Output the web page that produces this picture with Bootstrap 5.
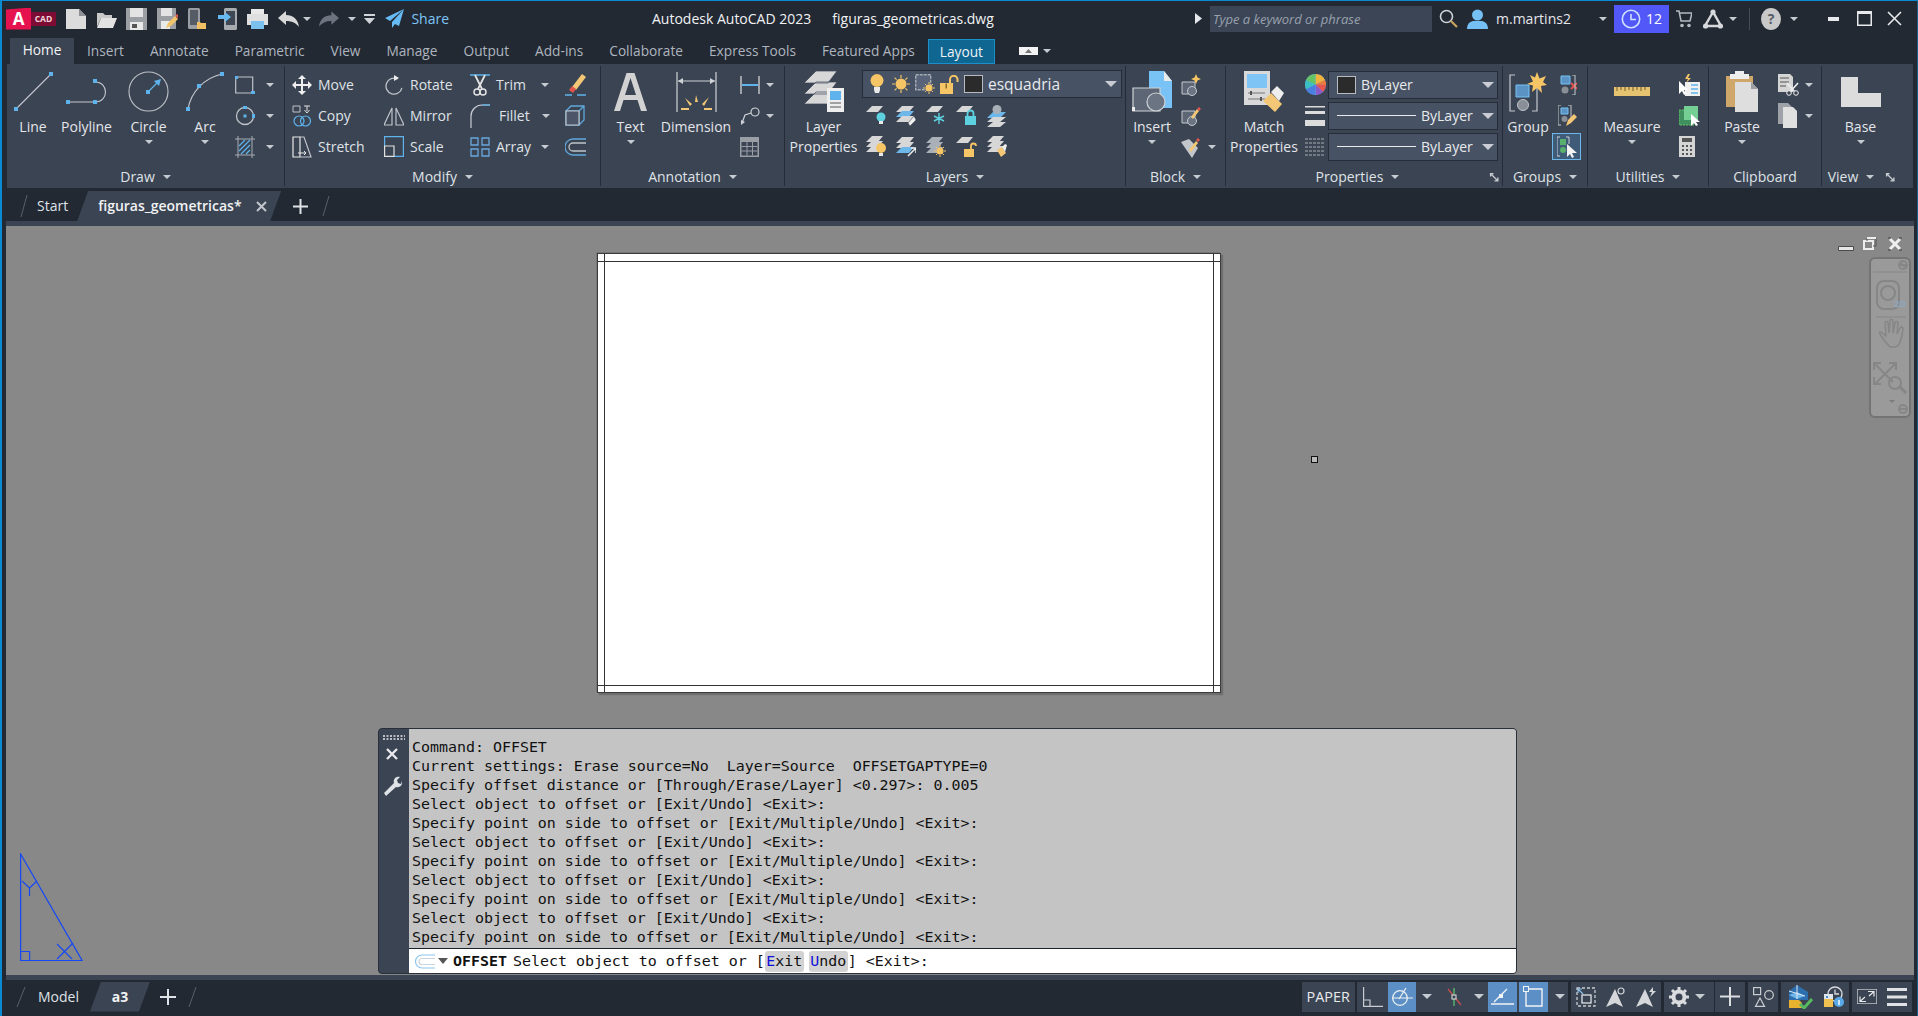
<!doctype html>
<html lang="en"><head><meta charset="utf-8"><title>Autodesk AutoCAD 2023</title>
<link href="https://cdn.jsdelivr.net/npm/bootstrap@5.3.0/dist/css/bootstrap.min.css" rel="stylesheet">
<style>
html,body{height:100%}
body{width:1918px;height:1016px;overflow:hidden;background:#222933;color:#dfe2e6;font-family:"Open Sans","Noto Sans",sans-serif;font-size:14px;line-height:20px}
svg{display:block;flex:none}
.frame{height:1016px;border-top:1px solid #0a8ad2;border-left:2px solid #0a8ad2;border-right:1px solid #1a5f88}
.cr{display:block;flex:none;width:0;height:0;border-left:4px solid transparent;border-right:4px solid transparent;border-top:4px solid #c6cbd2}
.titlebar{height:37px;padding-bottom:2px}
.tb-left{width:650px}
.tb-title{width:543px;color:#f1f2f4}
.logo-a{width:25px;height:22px;margin-left:4px;background:#e5124f;color:#fff;font-weight:700;font-size:17px;line-height:21px;text-align:center;clip-path:polygon(0 2px,100% 0,100% 100%,0 100%)}
.logo-c{width:25px;height:14px;background:#7d0b33;color:#f3d6de;font-weight:700;font-size:8.5px;line-height:14px;text-align:center}
.qat{width:30.3px;height:30px}
.ml3{margin-left:3px}.ml5{margin-left:5px}.ml6{margin-left:6px}.ml7{margin-left:7px}.ml8{margin-left:8px}.ml9{margin-left:9px}.ml10{margin-left:10px}.ml11{margin-left:11px}.ml12{margin-left:12px}.ml14{margin-left:14px}.ml15{margin-left:15px}.ml18{margin-left:18px}.ml21{margin-left:21px}.ml30{margin-left:30px}
.c2{grid-column:2}.c3{grid-column:3}.c4{grid-column:4}.c5{grid-column:5}.r1{grid-row:1}.r2{grid-row:2}.r3{grid-row:3}
.share{color:#7fc6f6}
.srch{width:222px;height:26px;background:#3c4556;color:#98a1ad;font-style:italic;font-size:13px;line-height:26px;padding-left:3px}
.uname{width:103px;color:#e4e6ea}
.pill{width:55px;height:28px;background:#5158f7;color:#fff;padding-left:7px;gap:5px}
.vbar{width:1px;height:22px;background:#454c59}
.tabrow{height:26px;padding-left:8px}
.tabrow .nav-link{padding:0 13px;height:25px;line-height:24px;color:#aeb5bf;font-size:13.7px}
.tabrow .nav-link.on{background:#3b4453;color:#f2f3f5;padding:0;width:64px;text-align:center;height:26px}
.tabrow .nav-link.lay{background:#0f6690;color:#eef3f6;border:1px solid #1b8fca;padding:0 11px}
.ribbon{height:124px;background:#3b4453;margin-left:5px;width:1906px}
.pn{position:relative;border-right:1px solid #252c38;margin:2px 0}
.pb{display:grid;height:98px;margin-top:3px;grid-template-rows:31px 31px 31px}
.pf{height:21px;font-size:14px;color:#dfe2e6;align-items:center;margin-top:-1px}
.pt{gap:8px}
.big{grid-row:1/4;display:flex;flex-direction:column;align-items:center;font-size:14px;line-height:20px;text-align:center;white-space:nowrap;color:#e3e6ea}
.bi{height:45px;flex:none;display:flex;align-items:center;justify-content:center}
.big .lb{margin-top:3px}
.big .cr{margin-top:3px}
.s{display:flex;align-items:center;gap:6px;white-space:nowrap;height:31px}
.s .cr{margin-left:auto}
.p7{padding-left:7px}.p4{padding-left:4px}.p3{padding-left:3px}.p6{padding-left:6px}.p8{padding-left:8px}
.rp10{padding-right:10px}.rp9{padding-right:9px}
.g-draw{width:277px;grid-template-columns:52px 55px 69px 44px 57px}
.g-mod{width:315px;grid-template-columns:95px 86px 93px 40px}
.g-ann{width:183px;grid-template-columns:59px 72px 52px}
.g-lay{width:340px;grid-template-columns:77px 263px}
.g-blk{width:99px;grid-template-columns:52px 47px}
.g-pro{width:276px;grid-template-columns:76px 26px 170px}
.g-grp{width:84px;grid-template-columns:50px 34px}
.g-utl{width:120px;grid-template-columns:88px 32px}
.g-clp{width:112px;grid-template-columns:66px 46px}
.g-vew{width:90px;grid-template-columns:77px}
.ldd{height:28px;width:260px;margin:1px 0 0 0;padding:0 4px 0 7px;gap:5px;background:#475264;border:1px solid #262d39;color:#e8eaed}
.ldd .cr,.dd .cr{border-left-width:6px;border-right-width:6px;border-top-width:6px;margin-left:auto;border-top-color:#c9cdd3}
.esq{font-size:15.5px}
.lrow{display:flex;align-items:center;gap:10px;padding-left:4px}
.dd{height:28px;width:170px;background:#475264;border:1px solid #262d39;padding:0 3px 0 8px;gap:5px;color:#e8eaed;align-self:center}
.swt{width:19px;height:18px;background:#2b2b2b;border:1px solid #b8bcc2;flex:none}
.ddl{width:79px;height:1px;background:#e8eaed;flex:none}
.lnch{margin-right:3px}
.actv{width:29px;height:27px;border:1px solid #6eb7ea;background:#3f5b78;margin-left:-1px;align-self:center}
.ftabs{height:33px;padding-top:3px}
.ftab{height:30px;font-weight:600;color:#f1f2f4;background:#3b4453;width:204px;padding-left:21px;clip-path:polygon(11px 0,100% 0,calc(100% - 11px) 100%,0 100%);margin-left:9px}
.band{height:5px;background:#3b4453;margin-left:4px;margin-right:3px}
.canvas{position:relative;height:749px;background:#888;margin:0 3px 0 4px;overflow:hidden}
.paper{position:absolute;left:591px;top:27px;width:624px;height:440px;background:#fff;border:1px solid #3a3a3a;box-shadow:2px 2px 1px #6e6e6e,-1px -1px 0 #777}
.paper svg{position:absolute;left:0;top:0}
.pick{position:absolute;left:1305px;top:230px;width:7px;height:7px;border:1px solid #111;background:#bbb}
.ucs{position:absolute;left:14px;top:627px}
.vpc{position:absolute;left:1832px;top:10px}
.navb{position:absolute;left:1863px;top:31px;width:42px;height:161px;background:#9a9a9a;border:2px solid #747474;border-radius:6px}
.cmd{position:absolute;left:372px;top:502px;width:1139px;height:246px;background:#3b4453;border-radius:4px;overflow:hidden;border:1px solid #2a303b}
.cside{width:30px;padding-top:6px}
.mx3{margin-right:3px}
.cmain{width:1108px}
.clog{height:220px;background:#c4c4c4;padding:9px 0 0 3px;font-family:"DejaVu Sans Mono","Liberation Mono",monospace;font-size:14.95px;line-height:19px;color:#111;white-space:pre}
.cin{height:25px;background:#fff;border-top:1px solid #1c222c;font-family:"DejaVu Sans Mono","Liberation Mono",monospace;font-size:14.95px;line-height:23px;color:#111;white-space:pre;padding-left:5px}
.cin b{margin-left:5px;margin-right:6px}
.hl{display:inline-block;background:#d2d2d2;border-radius:3px;padding:0 1.5px;line-height:21px}
.hl i{font-style:normal;color:#1010d8}
.ul2{margin-left:5px}
.lbar{height:36px;padding-bottom:3px}
.ltab{height:30px;width:60px;background:#3b4453;clip-path:polygon(11px 0,100% 0,calc(100% - 11px) 100%,0 100%);font-weight:700;color:#f1f2f4;text-align:center;line-height:30px}
.sbar{margin-left:auto;margin-right:5px}
.sg{height:30px;background:#3b4453;display:flex;align-items:center}
.sc{width:29px;height:30px;display:flex;align-items:center;justify-content:center;flex:none}
.sc.on{background:#5c8fc6}
.w28{width:28px}.w31{width:31px}.w33{width:33px}
.sk{width:21px;height:30px;display:flex;align-items:center;justify-content:center;flex:none}
.k22{width:22px}.k16{width:16px}
.sk .cr{border-left-width:5px;border-right-width:5px;border-top-width:5px}
.sp{width:52.5px;text-align:center;color:#e8eaed;line-height:30px;font-size:14.4px;display:block}
.s1{width:130.5px;margin-left:2.5px}.s2{width:80px;margin-left:.5px}.s3{width:90px;justify-content:space-around;margin-left:3px}.s4{width:50px;margin-left:3px}.s5{width:30.5px;margin-left:.5px;justify-content:center}.s6{width:30px;justify-content:center;margin-left:3px}.s7{width:68px;justify-content:space-around;margin-left:3px}.s8{width:60px;justify-content:space-around;margin-left:3px}
.gap1{gap:1.5px}
</style></head>
<body>
<div class="frame d-flex flex-column">
<!-- title bar -->
<div class="titlebar d-flex align-items-center">
 <div class="tb-left d-flex align-items-center">
  <div class="logo-a">A</div><div class="logo-c">CAD</div>
  <div class="d-flex align-items-center ml5">
   <div class="qat d-flex align-items-center justify-content-center"><svg width="20" height="20" viewBox="0 0 20 20"><path d="M0 0h13l7 7v13H0z" fill="#dcdcdc"/><path d="M13 0v7h7" fill="#8c8f93"/></svg></div>
   <div class="qat d-flex align-items-center justify-content-center"><svg width="21" height="18" viewBox="0 0 21 18"><path d="M1 17V3h6l2 2h7v3H5L1 17z" fill="#c9c9c9"/><path d="M5 8h16l-4 10H1z" fill="#e2e2e2"/></svg></div>
   <div class="qat d-flex align-items-center justify-content-center"><svg width="21" height="22" viewBox="0 0 21 22"><path d="M0 0h21v22H0z" fill="#9b9fa4"/><path d="M4 0h13v9H4z" fill="#e3e3e3"/><path d="M4 14h13v8H4z" fill="#e9e9e9"/><path d="M6 16h5v4H6z" fill="#555"/></svg></div>
   <div class="qat d-flex align-items-center justify-content-center"><svg width="21" height="22" viewBox="0 0 21 22"><path d="M0 0h19v21H0z" fill="#9b9fa4"/><path d="M4 0h11v8H4z" fill="#e3e3e3"/><path d="M4 13h9v8H4z" fill="#e9e9e9"/><path d="M9 20l2-5 7-7 3 3-7 7z" fill="#f2c46c"/><path d="M18 8l2-2 1 1v3z" fill="#e65a4c"/></svg></div>
   <div class="qat d-flex align-items-center justify-content-center"><svg width="19" height="22" viewBox="0 0 19 22"><rect x="0" y="0" width="12" height="21" rx="1.5" fill="#9a9ea4"/><rect x="2" y="2" width="8" height="15" fill="#565c66"/><path d="M9 14h3l1 1h5v6H9z" fill="#f1c064"/></svg></div>
   <div class="qat d-flex align-items-center justify-content-center"><svg width="19" height="22" viewBox="0 0 19 22"><rect x="6" y="0" width="13" height="22" rx="1.5" fill="#a8acb1"/><rect x="8" y="3" width="9" height="14" fill="#3f4654"/><path d="M0 7h7V4l6 5-6 5v-3H0z" fill="#64b9f2"/></svg></div>
   <div class="qat d-flex align-items-center justify-content-center"><svg width="21" height="20" viewBox="0 0 21 20"><rect x="4" y="0" width="13" height="5" fill="#e8e8e8"/><path d="M0 5h21v11H0z" fill="#dfdfdf"/><rect x="4" y="12" width="13" height="8" fill="#7cc0ee"/></svg></div>
   <div class="qat d-flex align-items-center justify-content-center"><svg width="21" height="16" viewBox="0 0 21 16"><path d="M0 7l8-7v4c7 0 12 4 13 12-3-4-7-6-13-6v4z" fill="#d8d8d8"/></svg></div>
   <span class="cr"></span>
   <svg class="ml8" width="20" height="16" viewBox="0 0 21 16"><path d="M21 7l-8-7v4C6 4 1 8 0 16c3-4 7-6 13-6v4z" fill="#6d7480"/></svg>
   <span class="cr ml9"></span>
   <svg class="ml8" width="11" height="10" viewBox="0 0 11 10"><path d="M0 0h11v2H0zM0 4h11L5.5 10z" fill="#d0d3d8"/></svg>
   <svg class="ml10" width="19" height="19" viewBox="0 0 19 19"><path d="M19 0L0 9l5 3L19 0 7 13v6l3-4 4 2z" fill="#67bbf4"/></svg>
   <span class="share ml7">Share</span>
  </div>
 </div>
 <div class="tb-title"><span>Autodesk AutoCAD 2023</span><span class="ml21">figuras_geometricas.dwg</span></div>
 <svg width="7" height="11" viewBox="0 0 7 11"><path d="M0 0l7 5.5L0 11z" fill="#e6e8ec"/></svg>
 <div class="srch ml8">Type a keyword or phrase</div>
 <svg class="ml7" width="19" height="19" viewBox="0 0 19 19"><circle cx="7.5" cy="7.5" r="6" fill="none" stroke="#cfd2d6" stroke-width="1.6"/><path d="M12 12l6 6" stroke="#c9a35e" stroke-width="2.2"/></svg>
 <svg class="ml9" width="21" height="20" viewBox="0 0 21 20"><circle cx="10.5" cy="6" r="5.5" fill="#74bff3"/><path d="M0 20c0-6 4-8 7-8h7c3 0 7 2 7 8z" fill="#74bff3"/></svg>
 <span class="uname ml8">m.martins2</span><span class="cr"></span>
 <div class="pill d-flex align-items-center ml7"><svg width="20" height="20" viewBox="0 0 20 20"><circle cx="10" cy="10" r="8.7" fill="none" stroke="#cfe0ff" stroke-width="1.6"/><path d="M10 5v5.5h5" fill="none" stroke="#cfe0ff" stroke-width="1.6"/></svg><span>12</span></div>
 <svg class="ml7" width="16" height="18" viewBox="0 0 16 18"><path d="M0 1h3l2 10h9l2-8H4" fill="none" stroke="#b7bbc1" stroke-width="1.5"/><circle cx="6" cy="15.5" r="1.8" fill="#b7bbc1"/><circle cx="13" cy="15.5" r="1.8" fill="#b7bbc1"/></svg>
 <svg class="ml11" width="20" height="20" viewBox="0 0 20 20"><path d="M10 3L2 17h16z" fill="none" stroke="#d6d8dc" stroke-width="2.4"/><circle cx="10" cy="3" r="2.6" fill="#d6d8dc"/><circle cx="2.6" cy="17" r="2.6" fill="#d6d8dc"/><circle cx="17.4" cy="17" r="2.6" fill="#d6d8dc"/></svg>
 <span class="cr ml6"></span>
 <div class="vbar ml12"></div>
 <svg class="ml11" width="20" height="22" viewBox="0 0 20 22"><ellipse cx="10" cy="11" rx="10" ry="11" fill="#c9c9c9"/><text x="10" y="16" font-size="14" font-weight="700" text-anchor="middle" fill="#555c66" font-family="Open Sans">?</text></svg>
 <span class="cr ml9"></span>
 <svg class="ml30" width="11" height="4" viewBox="0 0 11 4"><path d="M0 0h11v4H0z" fill="#e6e8ec"/></svg>
 <svg class="ml18" width="15" height="15" viewBox="0 0 15 15"><path d="M.75 .75h13.5v13.5H.75z" fill="none" stroke="#e6e8ec" stroke-width="1.5"/><path d="M0 0h15v3H0z" fill="#e6e8ec"/></svg>
 <svg class="ml15" width="15" height="15" viewBox="0 0 15 15"><path d="M1 1l13 13M14 1L1 14" stroke="#e6e8ec" stroke-width="1.6"/></svg>
</div>
<!-- ribbon tabs -->
<ul class="nav tabrow flex-nowrap align-items-end">
 <li class="nav-item"><a class="nav-link on" href="#">Home</a></li>
 <li class="nav-item"><a class="nav-link" href="#">Insert</a></li>
 <li class="nav-item"><a class="nav-link" href="#">Annotate</a></li>
 <li class="nav-item"><a class="nav-link" href="#">Parametric</a></li>
 <li class="nav-item"><a class="nav-link" href="#">View</a></li>
 <li class="nav-item"><a class="nav-link" href="#">Manage</a></li>
 <li class="nav-item"><a class="nav-link" href="#">Output</a></li>
 <li class="nav-item"><a class="nav-link" href="#">Add-ins</a></li>
 <li class="nav-item"><a class="nav-link" href="#">Collaborate</a></li>
 <li class="nav-item"><a class="nav-link" href="#">Express Tools</a></li>
 <li class="nav-item"><a class="nav-link" href="#">Featured Apps</a></li>
 <li class="nav-item"><a class="nav-link lay" href="#">Layout</a></li>
 <li class="nav-item align-self-center d-flex align-items-center ms-4"><svg width="19" height="8" viewBox="0 0 19 8"><path d="M0 0h19v8H0z" fill="#f3f3f3"/><path d="M6 6l3.500-4L13 6z" fill="#777"/></svg><span class="cr ml5"></span></li>
</ul>
<!-- ribbon -->
<div class="ribbon d-flex">
 <div class="pn"><div class="pb g-draw">
  <div class="big"><div class="bi"><svg width="39" height="39" viewBox="0 0 39 39"><path d="M2 37L37 2" stroke="#c5c9cf" stroke-width="1.1"/><path d="M0 35h4v4H0zM35 0h4v4h-4z" fill="#5fb3ec"/></svg></div><span class="lb">Line</span></div>
  <div class="big"><div class="bi"><svg width="41" height="26" viewBox="0 0 41 26"><path d="M2 23h27M29 23c14 0 14-20 0-20" fill="none" stroke="#c5c9cf" stroke-width="1.1"/><path d="M0 21h4v4H0zM27 21h4v4h-4zM27 0h4v4h-4z" fill="#5fb3ec"/></svg></div><span class="lb">Polyline</span></div>
  <div class="big"><div class="bi"><svg width="41" height="41" viewBox="0 0 41 41"><circle cx="20.500" cy="20.500" r="19.500" fill="none" stroke="#bfc3c9" stroke-width="1.1"/><path d="M20 21L32 9" stroke="#5fb3ec" stroke-width="1.3"/><path d="M33 8l-7 2 5 5z M18 19h4v4h-4z" fill="#5fb3ec"/></svg></div><span class="lb">Circle</span><span class="cr"></span></div>
  <div class="big"><div class="bi"><svg width="38" height="39" viewBox="0 0 38 39"><path d="M2 37C5 20 18 6 36 2" fill="none" stroke="#c5c9cf" stroke-width="1.1"/><path d="M0 35h4v4H0zM11 12h4v4h-4zM34 0h4v4h-4z" fill="#5fb3ec"/></svg></div><span class="lb">Arc</span><span class="cr"></span></div>
  <div class="s p8 rp10"><svg width="20" height="18" viewBox="0 0 20 18"><path d="M.7 1h17v16H.7z" fill="none" stroke="#bfc3c9" stroke-width="1.2"/><path d="M16 15h4v3h-4zM0 0h3v3H0z" fill="#5fb3ec"/></svg><span class="cr"></span></div>
  <div class="s p8 rp10 c5 r2"><svg width="20" height="20" viewBox="0 0 20 20"><circle cx="10" cy="10" r="8.500" fill="none" stroke="#bfc3c9" stroke-width="1.3"/><path d="M8 0h4v3H8zM17 8h3v4h-3zM8.500 8.500h3v3h-3z" fill="#5fb3ec"/></svg><span class="cr"></span></div>
  <div class="s p8 rp10 c5 r3"><svg width="20" height="22" viewBox="0 0 20 22"><path d="M0 3h20M0 19h20M3 0v22M17 0v22" stroke="#a7acb3"/><path d="M4 10l6-6M4 15l11-11M6 18l9-9M11 18l4-4" stroke="#5fb3ec" stroke-width="1.300"/></svg><span class="cr"></span></div>
 </div><div class="pf d-flex justify-content-center"><div class="d-flex align-items-center pt"><span>Draw</span><span class="cr"></span></div></div></div>

 <div class="pn"><div class="pb g-mod">
  <div class="s p7"><svg width="20" height="20" viewBox="0 0 20 20"><path d="M10 0l4 4h-3v5h5V6l4 4-4 4v-3h-5v5h3l-4 4-4-4h3v-5H4v3l-4-4 4-4v3h5V4H6z" fill="#efefef"/></svg><span>Move</span></div>
  <div class="s p4"><svg width="20" height="20" viewBox="0 0 20 20"><path d="M11 3.200A8 8 0 1 0 18 10" fill="none" stroke="#bfc3c9" stroke-width="1.300" transform="rotate(20 10 11)"/><path d="M10 0v6l5-3z" fill="#ededed"/></svg><span>Rotate</span></div>
  <div class="s p4 rp10"><svg width="20" height="24" viewBox="0 0 20 24"><path d="M0 2h20" stroke="#5fb3ec" stroke-width="1.500"/><path d="M5 2l7 14M15 2L8 16" stroke="#e2e2e2" stroke-width="1.800"/><circle cx="7" cy="19" r="3" fill="none" stroke="#e2e2e2" stroke-width="1.500"/><circle cx="13" cy="19" r="3" fill="none" stroke="#e2e2e2" stroke-width="1.500"/></svg><span>Trim</span><span class="cr"></span></div>
  <div class="s p6"><svg width="21" height="23" viewBox="0 0 21 23"><path d="M7 14L17 1l4 3-10 13z" fill="#f3c775"/><path d="M4 17l3-4 4 3-3 4z" fill="#e2554e"/><path d="M0 22h7M12 22h9" stroke="#5fb3ec" stroke-width="1.300"/></svg></div>
  <div class="s p7 r2"><svg width="20" height="22" viewBox="0 0 20 22"><path d="M1 1h7v6H1z" fill="none" stroke="#bfc3c9"/><path d="M12 1h6M15 1v5M12.500 5l2.500 3 2.500-3" fill="none" stroke="#e2e2e2"/><circle cx="7" cy="16" r="5" fill="none" stroke="#5fb3ec" stroke-width="1.200"/><circle cx="13.500" cy="16" r="5" fill="none" stroke="#5fb3ec" stroke-width="1.200"/></svg><span>Copy</span></div>
  <div class="s p4 c2 r2"><svg width="20" height="20" viewBox="0 0 20 20"><path d="M8 2v17H0zM12 2v17h8z" fill="none" stroke="#bfc3c9" stroke-width="1.200"/></svg><span>Mirror</span></div>
  <div class="s p4 rp9 c3 r2"><svg width="20" height="24" viewBox="0 0 20 24"><path d="M1 24V12C1 6 6 1 12 1h8" fill="none" stroke="#c9cdd3" stroke-width="1.200"/><path d="M12 1h8" stroke="#5fb3ec" stroke-width="1.200"/></svg><span class="ml3">Fillet</span><span class="cr"></span></div>
  <div class="s p6 c4 r2"><svg width="20" height="21" viewBox="0 0 20 21"><path d="M1 6h13v14H1zM1 6l5-5h13v14l-5 5M14 6l5-5" fill="none" stroke="#5fa8dd" stroke-width="1.300"/><path d="M1 6h13v14H1z" fill="#4d5668" stroke="#bfc3c9" stroke-width="1.200"/></svg></div>
  <div class="s p7 r3"><svg width="20" height="22" viewBox="0 0 20 22"><path d="M1 1h7v20H1z" fill="none" stroke="#e8e8e8" stroke-width="1.200"/><path d="M8 1h4l7 20H8" fill="none" stroke="#bfc3c9" stroke-width="1.200"/><path d="M6 17h8M12 15l2 2-2 2" fill="none" stroke="#e8e8e8"/></svg><span>Stretch</span></div>
  <div class="s p4 c2 r3"><svg width="20" height="21" viewBox="0 0 20 21"><path d="M.6 10V.600h18.800V20.400H10" fill="none" stroke="#5fb3ec" stroke-width="1.200"/><path d="M.6 10h9.400v10.400H.6z" fill="none" stroke="#e2e2e2" stroke-width="1.200"/></svg><span>Scale</span></div>
  <div class="s p4 rp10 c3 r3"><svg width="20" height="20" viewBox="0 0 20 20"><path d="M1 1h7v7H1zM12 1h7v7h-7zM1 12h7v7H1zM12 12h7v7h-7z" fill="none" stroke="#6aa8dd" stroke-width="1.300"/></svg><span>Array</span><span class="cr"></span></div>
  <div class="s p6 c4 r3"><svg width="21" height="18" viewBox="0 0 21 18"><path d="M21 1H8a8 8 0 0 0 0 16h13" fill="none" stroke="#5fa8dd" stroke-width="1.300"/><path d="M21 5H8a4 4 0 0 0 0 8h13" fill="none" stroke="#bfc3c9" stroke-width="1.300"/></svg></div>
 </div><div class="pf d-flex justify-content-center"><div class="d-flex align-items-center pt"><span>Modify</span><span class="cr"></span></div></div></div>

 <div class="pn"><div class="pb g-ann">
  <div class="big"><div class="bi"><svg width="33" height="38" viewBox="0 0 33 38"><path d="M12.500 0h8L33 38h-6l-3.500-11H9.500L6 38H0zM11 22h11L16.500 5z" fill="#d2d2d2"/></svg></div><span class="lb">Text</span><span class="cr"></span></div>
  <div class="big"><div class="bi"><svg width="41" height="40" viewBox="0 0 41 40"><path d="M1 0v40M40 0v40M2 9h37" stroke="#cfd2d6" stroke-width="1.200"/><path d="M2 9l5-3v6zM39 9l-5-3v6z" fill="#cfd2d6"/><path d="M20 23l2 7h-3zM9 26l7 6-2 2zM33 25l-7 7 2 2zM5 36h8v2H5zM28 36h8v2h-8z" fill="#f3c775"/></svg></div><span class="lb">Dimension</span></div>
  <div class="s p8 rp10"><svg width="20" height="18" viewBox="0 0 20 18"><path d="M1 0v18M19 0v18" stroke="#e2e2e2" stroke-width="1.200"/><path d="M2 9h16" stroke="#5fb3ec" stroke-width="2"/></svg><span class="cr"></span></div>
  <div class="s p8 rp10 c3 r2"><svg width="20" height="18" viewBox="0 0 20 18"><circle cx="15" cy="5" r="4" fill="none" stroke="#d0d3d8" stroke-width="1.200"/><path d="M11 6L5 8 2 16" fill="none" stroke="#d0d3d8" stroke-width="1.200"/><path d="M1 18l0-5 4 2z" fill="#d0d3d8"/></svg><span class="cr"></span></div>
  <div class="s p8 c3 r3"><svg width="19" height="20" viewBox="0 0 19 20"><path d="M0 0h19v20H0z" fill="#9a9ea5"/><path d="M1.500 5h16v13.500h-16z" fill="#3b4453"/><path d="M1.500 9.500h16M1.500 14h16M7 5v13.500M12.500 5v13.500" stroke="#9a9ea5"/></svg></div>
 </div><div class="pf d-flex justify-content-center"><div class="d-flex align-items-center pt"><span>Annotation</span><span class="cr"></span></div></div></div>

 <div class="pn"><div class="pb g-lay">
  <div class="big"><div class="bi"><svg width="40" height="41" viewBox="0 0 40 41"><path d="M12 0h21l-9 12H0zM12 11h21l-9 12H0zM12 21h21l-9 12H0z" fill="#d7d7d7" stroke="#3b4453" stroke-width=".7"/><path d="M23 17h17v24H23z" fill="#eee"/><path d="M26 20h11v9H26z" fill="#5fb3ec"/><path d="M26 32h11M26 36h11" stroke="#555"/></svg></div><span class="lb">Layer</span><span>Properties</span></div>
  <div class="ldd d-flex align-items-center">
   <svg width="14" height="20" viewBox="0 0 14 20"><circle cx="7" cy="6.500" r="6.500" fill="#f6c566"/><path d="M4 13h6v3l-1 3H5l-1-3z" fill="#e9e9e9"/></svg>
   <svg class="ml3" width="18" height="18" viewBox="0 0 18 18"><circle cx="9" cy="9" r="5.500" fill="#f6c566"/><path d="M9 0v3M9 15v3M0 9h3M15 9h3M2.600 2.600l2 2M13.400 13.400l2 2M2.600 15.400l2-2M13.400 4.600l2-2" stroke="#f6c566" stroke-width="1.200"/></svg>
   <svg width="20" height="20" viewBox="0 0 20 20"><path d="M.7 .7h15v15H.7z" fill="#59647a" stroke="#a8acb3" stroke-width="1.400" stroke-dasharray="3 1"/><circle cx="14" cy="14" r="3.500" fill="#f6c566"/><path d="M14 8v2M14 18v2M8 14h2M18 14h2M10 10l1.400 1.400M16.600 16.600L18 18M10 18l1.400-1.400M16.600 11.400L18 10" stroke="#f6c566"/></svg>
   <svg width="19" height="19" viewBox="0 0 19 19"><path d="M0 8h13v11H0z" fill="#f6c566"/><path d="M5.500 8.500h1.500v5H5.500z" fill="#8a6d2e"/><path d="M10 8V4.500a3.500 3.500 0 0 1 7.500 0V7" fill="none" stroke="#f6c566" stroke-width="2"/></svg>
   <div class="swt"></div><span class="esq">esquadria</span><span class="cr"></span></div>
  <div class="lrow c2 r2">
   <svg width="20" height="19" viewBox="0 0 20 19"><path d="M6 0h11l-5 6H0z" fill="#d7d7d7"/><circle cx="15" cy="11" r="4.500" fill="#5ed1e0"/><path d="M13 15h4v3h-4z" fill="#e8e8e8"/></svg>
   <svg width="20" height="20" viewBox="0 0 20 20"><path d="M6 0h12l-5 6H0z" fill="#d7d7d7"/><path d="M6 5h12l-5 6H0z" fill="#6eb7ea"/><path d="M6 10h12l-5 6H0z" fill="#d7d7d7"/><path d="M18 10l-6 7 2 3 6-6z" fill="#eee" stroke="#3b4453" stroke-width=".5"/></svg>
   <svg width="20" height="19" viewBox="0 0 20 19"><path d="M6 0h11l-5 6H0z" fill="#d7d7d7"/><path d="M13 7v11M8 10l10 5M8 15l10-5" stroke="#5ed1e0" stroke-width="1.400"/></svg>
   <svg width="21" height="19" viewBox="0 0 21 19"><path d="M6 0h11l-5 6H0z" fill="#d7d7d7"/><path d="M9 10h11v9H9z" fill="#5ed1e0"/><path d="M11.500 10V7.500a3 3 0 0 1 6 0V10" fill="none" stroke="#5ed1e0" stroke-width="1.800"/></svg>
   <svg width="20" height="22" viewBox="0 0 20 22"><path d="M6 7h13l-6 6H0z" fill="#6eb7ea"/><path d="M6 12h13l-6 5H0zM6 17h13l-6 5H0z" fill="#d7d7d7"/><circle cx="10" cy="4.500" r="4.500" fill="#aab0b8"/></svg>
  </div>
  <div class="lrow c2 r3">
   <svg width="20" height="21" viewBox="0 0 20 21"><path d="M6 0h11l-5 6H0zM6 5h11l-5 6H0zM6 10h11l-5 6H0z" fill="#d7d7d7"/><circle cx="15" cy="12" r="5" fill="#f6c566"/><path d="M13 17h4v3h-4z" fill="#e8e8e8"/></svg>
   <svg width="20" height="20" viewBox="0 0 20 20"><path d="M6 0h12l-5 6H0z" fill="#d7d7d7"/><path d="M6 5h12l-5 6H0z" fill="#d7d7d7"/><path d="M6 10h12l-5 6H0z" fill="#6eb7ea"/><path d="M12 19l8-8M20 11h-5M20 11v5" fill="none" stroke="#eee" stroke-width="1.500"/></svg>
   <svg width="20" height="20" viewBox="0 0 20 20"><path d="M6 0h11l-5 6H0zM6 5h11l-5 6H0zM6 10h11l-5 6H0z" fill="#aab0b8"/><circle cx="14" cy="14" r="3.500" fill="#f6c566"/><path d="M14 8v2M14 18v2M8 14h2M18 14h2M10 10l1.400 1.400M16.600 16.600L18 18M10 18l1.400-1.400M16.600 11.400L18 10" stroke="#f6c566"/></svg>
   <svg width="21" height="20" viewBox="0 0 21 20"><path d="M6 0h11l-5 6H0z" fill="#d7d7d7"/><path d="M8 12h10v8H8z" fill="#f6c566"/><path d="M15 12V9a2.500 2.500 0 0 1 5 0" fill="none" stroke="#f6c566" stroke-width="1.800"/></svg>
   <svg width="20" height="21" viewBox="0 0 20 21"><path d="M6 0h11l-5 6H0zM6 5h11l-5 6H0zM6 10h11l-5 6H0z" fill="#d7d7d7"/><path d="M10 14l5-3 4 6-5 4z" fill="#f3c775"/><path d="M15 11l3-3 2 1-2 7z" fill="#eee"/></svg>
  </div>
 </div><div class="pf d-flex justify-content-center"><div class="d-flex align-items-center pt"><span>Layers</span><span class="cr"></span></div></div></div>

 <div class="pn"><div class="pb g-blk">
  <div class="big"><div class="bi"><svg width="40" height="41" viewBox="0 0 40 41"><path d="M17 0h15l8 10v27H17z" fill="#78c2f5"/><path d="M32 0v10h8" fill="#eaeaea"/><path d="M1 17h27v23H1z" fill="#5c6675" stroke="#cfd2d6" stroke-width="1.200"/><circle cx="24" cy="31" r="9" fill="#6a7483" stroke="#cfd2d6" stroke-width="1.200"/><path d="M0 36h3v4H0z" fill="#eaeaea"/></svg></div><span class="lb">Insert</span><span class="cr"></span></div>
  <div class="s p3"><svg width="20" height="22" viewBox="0 0 20 22"><path d="M1 8h13v12H1z" fill="#5c6675" stroke="#c5c9cf"/><circle cx="11" cy="17" r="4.500" fill="#6a7483" stroke="#c5c9cf"/><path d="M15 0l1.500 3.500L20 5l-3.500 1.500L15 10l-1.500-3.500L10 5l3.500-1.500z" fill="#f6c566"/></svg></div>
  <div class="s p3 c2 r2"><svg width="20" height="22" viewBox="0 0 20 22"><path d="M1 6h13v12H1z" fill="#5c6675" stroke="#c5c9cf"/><circle cx="11" cy="16" r="4.500" fill="#6a7483" stroke="#c5c9cf"/><path d="M10 12L16 4l2 2-6 8z" fill="#f3c775"/><path d="M16 4l2-2 2 2-2 2z" fill="#e2554e"/></svg></div>
  <div class="s p3 rp9 c2 r3"><svg width="20" height="22" viewBox="0 0 20 22"><path d="M0 6l8-3 9 9-6 10z" fill="#c3c6cb"/><path d="M8 14L15 5l2 2-7 9z" fill="#f3c775"/><path d="M15 4l2-2 2 2-2 2z" fill="#e2554e"/></svg><span class="cr"></span></div>
 </div><div class="pf d-flex justify-content-center"><div class="d-flex align-items-center pt"><span>Block</span><span class="cr"></span></div></div></div>

 <div class="pn"><div class="pb g-pro">
  <div class="big"><div class="bi"><svg width="40" height="41" viewBox="0 0 40 41"><path d="M0 0h26v34H0z" fill="#d9d9d9"/><path d="M3 3h20v14H3z" fill="#7ec4f5"/><path d="M4 22h17M4 28h17" stroke="#777"/><path d="M7 20v4M17 26v4" stroke="#555" stroke-width="2"/><path d="M19 30l8-8 11 11-7 8z" fill="#f3c775"/><path d="M27 21l6-6 7 7-5 8z" fill="#eee"/></svg></div><span class="lb">Match</span><span>Properties</span></div>
  <div class="s p3"><svg width="21" height="21" viewBox="0 0 21 21"><circle cx="10.500" cy="10.500" r="10.500" fill="#6ea8e8"/><path d="M10.500 10.500V0A10.500 10.500 0 0 1 20 6z" fill="#f2b33c"/><path d="M10.500 10.500L20 6a10.500 10.500 0 0 1 1 5z" fill="#ee7b3a"/><path d="M10.500 10.500L21 11a10.500 10.500 0 0 1-3 7z" fill="#e8554f"/><path d="M10.500 10.500L18 18a10.500 10.500 0 0 1-7 3z" fill="#8c5ac8"/><path d="M10.500 10.500V21A10.500 10.500 0 0 1 1 15z" fill="#4a7fe0"/><path d="M10.500 10.500L1 15A10.500 10.500 0 0 1 1 6z" fill="#3bbfc4"/><path d="M10.500 10.500L1 6A10.500 10.500 0 0 1 10.500 0z" fill="#64c466"/></svg></div>
  <div class="dd d-flex align-items-center c3 r1"><div class="swt"></div><span>ByLayer</span><span class="cr"></span></div>
  <div class="s p3 c2 r2"><svg width="20" height="20" viewBox="0 0 20 20"><path d="M0 0h20v1.500H0zM0 5h20v3H0zM0 14h20v6H0z" fill="#dcdcdc"/></svg></div>
  <div class="dd d-flex align-items-center c3 r2"><div class="ddl"></div><span>ByLayer</span><span class="cr"></span></div>
  <div class="s p3 c2 r3"><svg width="20" height="18" viewBox="0 0 20 18"><path d="M0 1h20M0 5h20M0 9h20M0 13h20M0 17h20" stroke="#a9adb3" stroke-dasharray="3 1"/></svg></div>
  <div class="dd d-flex align-items-center c3 r3"><div class="ddl"></div><span>ByLayer</span><span class="cr"></span></div>
 </div><div class="pf d-flex"><div class="d-flex align-items-center justify-content-center pt flex-grow-1"><span>Properties</span><span class="cr"></span></div><svg class="lnch" width="10" height="10" viewBox="1 1 11 11"><path d="M2 2h4v1.500H4.500L10 9V7h1.500v4.500H7V10h2L3.500 4.500V6H2z" fill="#c6cbd2"/></svg></div></div>

 <div class="pn"><div class="pb g-grp">
  <div class="big"><div class="bi"><svg width="38" height="40" viewBox="0 0 38 40"><path d="M6 3H1v36h5M28 10v29h-5" fill="none" stroke="#c5c9cf" stroke-width="1.200"/><path d="M7 13h13v12H7z" fill="#5b93c4" stroke="#78c2f5"/><circle cx="14" cy="33" r="5.500" fill="#8a8f97" stroke="#bfc3c9"/><path d="M28 0l2.500 6.500L37 4l-3 6 4 3-6 1 1 7-5-5-5 4 1-6.500-6-1.500 6-2.500L21 3l5 2.500z" fill="#f6c566"/></svg></div><span class="lb">Group</span></div>
  <div class="s ml5"><svg width="19" height="20" viewBox="0 0 19 20"><path d="M3 1h9v8H3z" fill="#5b93c4" stroke="#78c2f5"/><circle cx="7" cy="15" r="3.500" fill="#8a8f97"/><path d="M13 8l6 6M19 8l-6 6" stroke="#e2554e" stroke-width="2"/><path d="M14 0h3v20h-3" fill="none" stroke="#c5c9cf"/></svg></div>
  <div class="s ml5 c2 r2"><svg width="19" height="22" viewBox="0 0 19 22"><path d="M3 0H0v20h3M10 0h3v13" fill="none" stroke="#c5c9cf"/><path d="M3 3h7v6H3z" fill="#5b93c4" stroke="#78c2f5"/><circle cx="6.500" cy="14" r="3" fill="#8a8f97"/><path d="M8 21l2-6 6-6 3 3-6 6z" fill="#f3c775"/></svg></div>
  <div class="actv d-flex align-items-center justify-content-center c2 r3"><svg width="20" height="22" viewBox="0 0 20 22"><path d="M3 1H0v19h3M9 1h3v7" fill="none" stroke="#cfd2d6"/><path d="M3 3h6v6H3z" fill="#58b06c"/><circle cx="6" cy="14" r="3" fill="#58b06c"/><path d="M10 8v13l3-3 2 4 2-1-2-4h5z" fill="#f3f3f3"/></svg></div>
 </div><div class="pf d-flex justify-content-center"><div class="d-flex align-items-center pt"><span>Groups</span><span class="cr"></span></div></div></div>

 <div class="pn"><div class="pb g-utl">
  <div class="big"><div class="bi"><svg width="36" height="9" viewBox="0 0 36 9"><path d="M0 0h36v9H0z" fill="#e6c370"/><path d="M3 0v4M7 0v3M11 0v4M15 0v3M19 0v4M23 0v3M27 0v4M31 0v3" stroke="#6e5a2c"/></svg></div><span class="lb">Measure</span><span class="cr"></span></div>
  <div class="s p3"><svg width="21" height="22" viewBox="0 0 21 22"><path d="M6 8h15v14H6z" fill="#f0f0f0"/><path d="M12 11h7M12 15h7M12 19h7" stroke="#5fb3ec" stroke-width="1.500"/><path d="M0 7v13l3-3 2 4 2-1-2-4h4z" fill="#fff"/><path d="M9 0L6 5h3L7 9l5-5H9l2-4z" fill="#f6c566"/></svg></div>
  <div class="s p3 c2 r2"><svg width="21" height="22" viewBox="0 0 21 22"><path d="M0 5h15v15H0z" fill="#3f8f5f" stroke="#64c466" stroke-dasharray="2 1"/><path d="M5 1h14v14H5z" fill="#74cf94"/><path d="M12 9v12l3-3 2 3 2-1-2-3h4z" fill="#fff"/></svg></div>
  <div class="s p3 c2 r3"><svg width="16" height="21" viewBox="0 0 16 21"><path d="M0 0h16v21H0z" fill="#d5d5d5"/><path d="M3 2h10v4H3z" fill="#555"/><path d="M3 9h2v2H3zM7 9h2v2H7zM11 9h2v2h-2zM3 13h2v2H3zM7 13h2v2H7zM11 13h2v2h-2zM3 17h2v2H3zM7 17h2v2H7zM11 17h2v2h-2z" fill="#555"/></svg></div>
 </div><div class="pf d-flex justify-content-center"><div class="d-flex align-items-center pt"><span>Utilities</span><span class="cr"></span></div></div></div>

 <div class="pn"><div class="pb g-clp">
  <div class="big"><div class="bi"><svg width="32" height="41" viewBox="0 0 32 41"><path d="M0 5h27v31H0z" fill="#cfa76a"/><path d="M9 0h9v3h5v5H4V3h5z" fill="#eee"/><path d="M9 11h16l7 7v23H9z" fill="#dedede"/><path d="M25 11v7h7" fill="#9ca0a6"/></svg></div><span class="lb">Paste</span><span class="cr"></span></div>
  <div class="s p3 rp10"><svg width="21" height="22" viewBox="0 0 21 22"><path d="M0 0h12l3 3v15H0z" fill="#d5d5d5"/><path d="M2 4h9M2 8h9M2 12h6" stroke="#555"/><path d="M9 9l8 9M20 9l-8 9" stroke="#eee" stroke-width="1.600"/><circle cx="11" cy="19" r="2.300" fill="#3b4453" stroke="#eee"/><circle cx="18" cy="19" r="2.300" fill="#3b4453" stroke="#eee"/></svg><span class="cr"></span></div>
  <div class="s p3 rp10 c2 r2"><svg width="21" height="26" viewBox="0 0 21 26"><path d="M0 0h10l4 4v17H0z" fill="#9ea2a8"/><path d="M5 4h10l4 4v17H5z" fill="#e0e0e0"/></svg><span class="cr"></span></div>
 </div><div class="pf d-flex justify-content-center"><div class="d-flex align-items-center pt"><span>Clipboard</span></div></div></div>

 <div class="pn border-0"><div class="pb g-vew">
  <div class="big"><div class="bi"><svg width="40" height="30" viewBox="0 0 40 30"><path d="M0 0h17v16h23v14H0z" fill="#dcdcdc"/></svg></div><span class="lb">Base</span><span class="cr"></span></div>
 </div><div class="pf d-flex"><div class="d-flex align-items-center justify-content-center pt flex-grow-1"><span>View</span><span class="cr"></span></div><svg class="lnch ml5" width="10" height="10" viewBox="1 1 11 11"><path d="M2 2h4v1.500H4.500L10 9V7h1.500v4.500H7V10h2L3.500 4.500V6H2z" fill="#c6cbd2"/></svg><span class="ml14"></span></div></div>
</div>
<!-- file tabs -->
<div class="ftabs d-flex align-items-center">
 <svg class="ml18" width="8" height="22" viewBox="0 0 8 22"><path d="M7 0L1 22" stroke="#58606d"/></svg>
 <span class="ml9">Start</span>
 <div class="ftab d-flex align-items-center"><span>figuras_geometricas*</span><svg class="ml14" width="11" height="11" viewBox="0 0 11 11"><path d="M1 1l9 9M10 1l-9 9" stroke="#c2c6cc" stroke-width="2"/></svg></div>
 <svg class="ml12" width="15" height="15" viewBox="0 0 15 15"><path d="M7.500 0v15M0 7.500h15" stroke="#dfe2e6" stroke-width="2"/></svg>
 <svg class="ml14" width="8" height="20" viewBox="0 0 8 20"><path d="M7 0L1 20" stroke="#58606d"/></svg>
</div>
<div class="band"></div>
<!-- canvas -->
<div class="canvas">
 <div class="paper"><svg width="622" height="438" viewBox="0 0 622 438"><path d="M6.500 0v438M615.500 0v438M0 7.500h622M0 431.500h622" stroke="#333" fill="none"/></svg></div>
 <div class="pick"></div>
 <svg class="ucs" width="66" height="110" viewBox="0 0 66 110"><g fill="none" stroke="#1548f5" stroke-width="1.200"><path d="M.6 1v106.500h61.500z"/><path d="M.6 98.500h9v9M2 28l7.500 7 7.500-7M9.500 35v8M37 91l15 15M37 106l16-16"/></g></svg>
 <svg class="vpc" width="70" height="16" viewBox="0 0 70 16"><path d="M.5 10.500h15v4H.5z" fill="#e8e8e8" stroke="#4a4a4a"/><path d="M26 5h9v8h-9z" fill="none" stroke="#eee" stroke-width="2"/><path d="M29 5V2h9v8h-3" fill="none" stroke="#555"/><path d="M29 2h9" stroke="#eee" stroke-width="2"/><path d="M52 3l10 10M62 3L52 13" stroke="#eee" stroke-width="3"/><path d="M50 2h3M61 2h3M50 14h3M61 14h3" stroke="#444"/></svg>
 <div class="navb">
  <svg width="38" height="157" viewBox="0 0 38 157"><g fill="none" stroke="#868686" stroke-width="2"><path d="M2 13h34M5 58h30" stroke-width="1"/><circle cx="32" cy="6" r="4"/><path d="M29 6h6M30 4l4 4"/><rect x="6" y="22" width="22" height="28" rx="7"/><circle cx="17" cy="34" r="7"/><path d="M19 88c-3-3-12-14-10-15 2-1 5 4 6 4l-1-13c0-2 3-2 3 0l1 10 1-12c0-2 3-2 3 0l0 12 2-10c0-2 3-2 3 0l-1 11 3-6c1-2 3-1 3 1-1 5-2 18-8 18z" stroke-width="1.500"/><path d="M4 105l18 18M24 105L4 125M3 111v-7h7M25 111v-7h-7M3 118v7h7"/><circle cx="24" cy="124" r="6"/><path d="M29 128l6 6" stroke-width="3"/><circle cx="32" cy="150" r="4"/><path d="M29 150h6"/></g><path d="M18 141h6l-3 3z" fill="#7b7b7b"/><text x="23" y="48" font-size="9" font-weight="700" fill="#8ea7bf" font-family="Open Sans">2D</text></svg>
 </div>
 <div class="cmd d-flex">
  <div class="cside d-flex flex-column align-items-center">
   <svg width="22" height="5" viewBox="0 0 22 5"><path d="M0 1h22M0 4h22" stroke="#e6e8ec" stroke-width="1.500" stroke-dasharray="2 1.500"/></svg>
   <svg class="mt-2 mx3" width="12" height="12" viewBox="0 0 12 12"><path d="M1 1l10 10M11 1L1 11" stroke="#e8eaed" stroke-width="2.400"/></svg>
   <svg class="mt-3 mx3" width="19" height="20" viewBox="0 0 19 20"><path d="M1 17L11 7c-1-3 1-7 6-6l-3 3 1 3 3 1 1-3c1 5-3 7-6 6L3 20z" fill="#dfe2e6"/></svg>
  </div>
  <div class="cmain d-flex flex-column">
<div class="clog">Command: OFFSET
Current settings: Erase source=No  Layer=Source  OFFSETGAPTYPE=0
Specify offset distance or [Through/Erase/Layer] &lt;0.297&gt;: 0.005
Select object to offset or [Exit/Undo] &lt;Exit&gt;:
Specify point on side to offset or [Exit/Multiple/Undo] &lt;Exit&gt;:
Select object to offset or [Exit/Undo] &lt;Exit&gt;:
Specify point on side to offset or [Exit/Multiple/Undo] &lt;Exit&gt;:
Select object to offset or [Exit/Undo] &lt;Exit&gt;:
Specify point on side to offset or [Exit/Multiple/Undo] &lt;Exit&gt;:
Select object to offset or [Exit/Undo] &lt;Exit&gt;:
Specify point on side to offset or [Exit/Multiple/Undo] &lt;Exit&gt;:</div>
   <div class="cin d-flex align-items-center"><svg width="21" height="15" viewBox="0 0 21 15"><path d="M21 1H8a6.500 6.500 0 0 0 0 13h13" fill="none" stroke="#8cc6ee" stroke-width="1.200"/><path d="M21 4.500H8a3 3 0 0 0 0 6h13" fill="none" stroke="#c9d3dc" stroke-width="1.200"/></svg><svg class="ml3" width="10" height="6" viewBox="0 0 10 6"><path d="M0 0h10L5 6z" fill="#555"/></svg><b>OFFSET</b><span>Select object to offset or [<span class="hl"><i>E</i>xit</span><span class="hl ul2"><i>U</i>ndo</span>] &lt;Exit&gt;:</span></div>
  </div>
 </div>
</div>
<div class="band"></div>
<!-- layout tabs + status -->
<div class="lbar d-flex align-items-center">
 <svg class="ml14" width="10" height="20" viewBox="0 0 10 20"><path d="M9 0L1 20" stroke="#58606d"/></svg>
 <span class="ml12">Model</span>
 <div class="ltab ml11">a3</div>
 <svg class="ml10" width="16" height="16" viewBox="0 0 16 16"><path d="M8 0v16M0 8h16" stroke="#dfe2e6" stroke-width="2"/></svg>
 <svg class="ml12" width="9" height="20" viewBox="0 0 9 20"><path d="M8 0L1 20" stroke="#58606d"/></svg>
 <div class="sbar d-flex align-items-center">
  <div class="sg sp">PAPER</div>
  <div class="sg s1">
   <div class="sc w31"><svg width="20" height="20" viewBox="0 0 20 20"><path d="M.6 0v19.400H20M.6 13h6.400v6.400" fill="none" stroke="#c9ccd0" stroke-width="1.200"/></svg></div>
   <div class="sc w28 on"><svg width="21" height="18" viewBox="0 0 21 18"><circle cx="8" cy="10" r="7.300" fill="none" stroke="#eef1f4" stroke-width="1.300"/><path d="M0 10h21M7 11L14 0" stroke="#eef1f4" stroke-width="1.200"/></svg></div>
   <div class="sk k22"><span class="cr"></span></div>
   <div class="sc w33"><svg width="15" height="18" viewBox="0 0 15 18"><path d="M1 1l13 16" stroke="#c05050" stroke-width="1.300"/><path d="M7 0v18" stroke="#58c070" stroke-width="1.300"/><rect x="5" y="7" width="4" height="4" fill="#3b4453" stroke="#e2e2e2"/></svg></div>
   <div class="sk k16"><span class="cr"></span></div>
  </div>
  <div class="sg s2 gap1">
   <div class="sc on"><svg width="23" height="17" viewBox="0 0 23 17"><path d="M0 16h23M3 14L16 1" stroke="#f1f3f5" stroke-width="1.400"/><rect x="8" y="6" width="4" height="4" fill="#f1f3f5"/></svg></div>
   <div class="sc on"><svg width="20" height="21" viewBox="0 0 20 21"><path d="M3 3h16v17H3z" fill="none" stroke="#f1f3f5" stroke-width="1.400"/><rect x=".5" y=".5" width="5" height="5" fill="#5c8fc6" stroke="#f1f3f5"/></svg></div>
   <div class="sk"><span class="cr"></span></div>
  </div>
  <div class="sg s3">
   <svg width="20" height="20" viewBox="0 0 20 20"><path d="M1 1h18v18H1z" fill="none" stroke="#c9ccd0" stroke-width="1.300" stroke-dasharray="3 2"/><rect x="6" y="8" width="9" height="8" fill="none" stroke="#e0e2e5" stroke-width="1.300"/><path d="M2 2l5 5M2 2h4M2 2v4" stroke="#8fc2ea" stroke-width="1.200"/></svg>
   <svg width="20" height="20" viewBox="0 0 20 20"><path d="M9 2L0 20l9-4 8 4z" fill="#d5d7db"/><circle cx="15" cy="4" r="3" fill="none" stroke="#d5d7db" stroke-width="1.200"/></svg>
   <svg width="20" height="20" viewBox="0 0 20 20"><path d="M9 2L0 20l9-4 8 4z" fill="#d5d7db"/><path d="M17 0l-4 5h3l-2 5 6-6h-3z" fill="#d5d7db"/></svg>
  </div>
  <div class="d-flex">
   <div class="sg s4"><svg class="ml5" width="20" height="20" viewBox="0 0 20 20"><circle cx="10" cy="10" r="5.500" fill="none" stroke="#d9dbde" stroke-width="4"/><path d="M10 0v4M10 16v4M0 10h4M16 10h4M3 3l3 3M14 14l3 3M3 17l3-3M14 6l3-3" stroke="#d9dbde" stroke-width="3"/></svg><div class="sk"><span class="cr"></span></div></div>
   <div class="sg s5"><svg width="20" height="19" viewBox="0 0 20 19"><path d="M10 0v19M0 9.500h20" stroke="#dcdee1" stroke-width="2"/></svg></div>
  </div>
  <div class="sg s6"><svg width="21" height="20" viewBox="0 0 21 20"><rect x=".6" y=".6" width="7" height="7" fill="none" stroke="#c9ccd0" stroke-width="1.200"/><circle cx="16" cy="8" r="4.300" fill="none" stroke="#c9ccd0" stroke-width="1.200"/><path d="M7 11l4.500 8.400h-9z" fill="none" stroke="#c9ccd0" stroke-width="1.200"/></svg></div>
  <div class="sg s7">
   <svg width="26" height="24" viewBox="0 0 26 24"><path d="M10 0l11 7v8H2V6z" fill="#2d6fae"/><path d="M2 10l8-3 8 4-8 3z" fill="#6fb6ea"/><path d="M10 0v14M2 6l16 5" stroke="#dfeaf3"/><path d="M2 15h10l3 3v5H2z" fill="#e9b22e"/><path d="M13 19l4 4 8-9" fill="none" stroke="#57b85f" stroke-width="3"/></svg>
   <svg width="20" height="21" viewBox="0 0 20 21"><circle cx="11" cy="8" r="7" fill="none" stroke="#d9dbde" stroke-width="1.400"/><path d="M11 3.500v4.500h4" fill="none" stroke="#d9dbde" stroke-width="1.300"/><path d="M0 8h9v13H0z" fill="#f0c050"/><path d="M0 8h9v5H0z" fill="#dfe5ea"/><path d="M2 10h2v2H2z" fill="#4b8fd0"/><circle cx="15" cy="16" r="5" fill="#59a9e8"/><path d="M14.300 14h1.400v5h-1.400z" fill="#fff"/></svg>
  </div>
  <div class="sg s8">
   <svg width="20" height="15" viewBox="0 0 20 15"><path d="M0 0h20v15H0z" fill="none" stroke="#c0c3c8" stroke-width="1.500"/><path d="M11 2.500h6v5M17 2.500l-5 4.500M9 12.500H3v-5M3 12.500l5-4.500" fill="none" stroke="#e8e9eb" stroke-width="1.200"/></svg>
   <svg width="20" height="18" viewBox="0 0 20 18"><path d="M0 0h20v3H0zM0 7.500h20v3H0zM0 15h20v3H0z" fill="#dfe1e4"/></svg>
  </div>
 </div>
</div>
</div>
</body></html>
